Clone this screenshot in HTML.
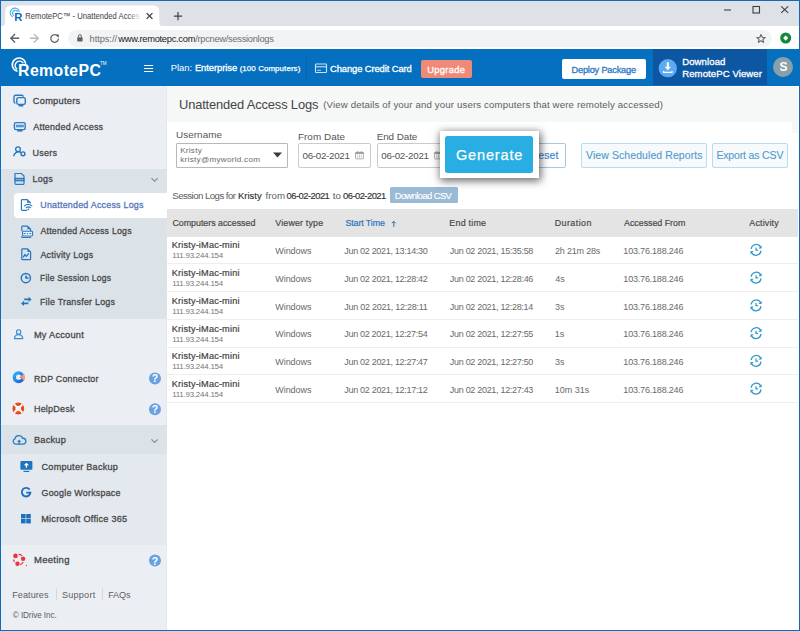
<!DOCTYPE html>
<html><head><meta charset="utf-8">
<style>
*{margin:0;padding:0;box-sizing:border-box}
html,body{width:800px;height:631px;overflow:hidden;background:#fff}
body{position:relative;font-family:"Liberation Sans",sans-serif;color:#444}
.a{position:absolute}
#frame{position:absolute;left:0;top:0;width:800px;height:631px;border:1px solid #0f6cbd;z-index:60}
svg.ov{position:absolute;left:0;top:0;z-index:20;font-family:"Liberation Sans",sans-serif}
#pop{z-index:30}
.sep{position:absolute;left:167px;width:631px;height:1px;background:#eeeeee}
.ob{position:absolute;border:1px solid #b9dbee;border-radius:2px;background:#f6fafd}
</style></head>
<body>
<div id="frame"></div>
<!-- ===== Chrome ===== -->
<div class="a" style="left:0;top:0;width:800px;height:26.3px;background:#dee1e6"></div>
<svg class="a" style="left:0;top:0" width="170" height="27"><path d="M0.5 27 Q5.2 26.5 5.2 21.5 V11.5 Q5.2 5.5 11.2 5.5 H153 Q159.3 5.5 159.3 11.5 V21.5 Q159.3 26.5 164 27 Z" fill="#fff"/></svg>
<div class="a" style="left:0;top:26px;width:800px;height:23px;background:#fff"></div>
<div class="a" style="left:68px;top:29.5px;width:704px;height:17px;background:#f1f3f4;border-radius:8.5px"></div>
<!-- ===== Header ===== -->
<div class="a" style="left:0;top:49px;width:800px;height:37px;background:#0570c0"></div>
<div class="a" style="left:653px;top:49px;width:114px;height:36px;background:#0d57a2"></div>
<div class="a" style="left:306px;top:57px;width:1px;height:21px;background:#0a60aa"></div>
<div class="a" style="left:421px;top:60px;width:50.5px;height:18.2px;background:#f08a78;border-radius:2px"></div>
<div class="a" style="left:562.3px;top:59px;width:83.7px;height:19.7px;background:#fff;border-radius:2px"></div>
<div class="a" style="left:773.1px;top:57.1px;width:19.8px;height:19.8px;background:#89a0a9;border-radius:50%"></div>
<!-- ===== Sidebar ===== -->
<div class="a" style="left:0;top:86px;width:167px;height:545px;background:#ebeff3;border-right:1px solid #e4e9ed"></div>
<div class="a" style="left:0;top:168.5px;width:167px;height:150.5px;background:#dbe3e9"></div>
<div class="a" style="left:14px;top:192.5px;width:153px;height:25.5px;background:#fff;border-radius:4px 0 0 4px"></div>
<div class="a" style="left:0;top:424.5px;width:167px;height:29.5px;background:#dbe3e9"></div>
<div class="a" style="left:0;top:454px;width:167px;height:90.5px;background:#e3e9ee"></div>
<div class="a" style="left:55.8px;top:588.4px;width:1px;height:11.6px;background:#d3d9de"></div>
<div class="a" style="left:101.8px;top:588.4px;width:1px;height:11.6px;background:#d3d9de"></div>
<!-- ===== Content ===== -->
<div class="a" style="left:167px;top:87px;width:631px;height:35.2px;background:#f6f7f7"></div>
<div class="a" style="left:792px;top:122px;width:5.8px;height:10.6px;background:#f6f7f7"></div>
<div class="a" style="left:176.3px;top:143px;width:112.1px;height:24.7px;border:1px solid #b8b8b8;border-radius:1px"></div>
<div class="a" style="left:298.4px;top:143px;width:72.2px;height:25px;border:1px solid #cbcbcb;border-radius:2px"></div>
<div class="a" style="left:377px;top:143px;width:72.2px;height:25px;border:1px solid #cbcbcb;border-radius:2px"></div>
<div class="a" style="left:490px;top:143px;width:76.3px;height:25px;border:1px solid #a9c6e6;border-radius:2px;background:#fff"></div>
<div class="ob" style="left:581.2px;top:143px;width:126.2px;height:25px"></div>
<div class="ob" style="left:712.2px;top:143px;width:75.8px;height:25px"></div>
<div class="a" style="left:390px;top:187.2px;width:67.6px;height:16.1px;background:#9bbad5;border-radius:1.5px"></div>
<div class="a" style="left:167px;top:209.3px;width:631px;height:27.4px;background:#e4e4e4"></div>
<div class="sep" style="top:263px"></div>
<div class="sep" style="top:291px"></div>
<div class="sep" style="top:319px"></div>
<div class="sep" style="top:347px"></div>
<div class="sep" style="top:374px"></div>
<div class="sep" style="top:402px"></div>
<!-- Generate popup -->
<div class="a" id="pop" style="left:439.8px;top:130.8px;width:99.1px;height:47.2px;background:#fff;box-shadow:0.5px 1.5px 8px 1px rgba(0,0,0,.58)">
 <div class="a" style="left:5.1px;top:5.2px;width:88px;height:37.1px;background:#29aee3;border-radius:2.5px"></div>
 <svg class="a" style="left:0;top:0" width="100" height="48"><text x="15.9" y="28.9" font-family="Liberation Sans" font-size="14.5" fill="#fff" stroke="#fff" stroke-width="0.25" letter-spacing="0.87">Generate</text></svg>
</div>
<svg class="ov" width="800" height="631" viewBox="0 0 800 631" fill="none">
<defs><linearGradient id="fade" gradientUnits="userSpaceOnUse" x1="128" y1="0" x2="141" y2="0"><stop offset="0" stop-color="#3c4043"/><stop offset="1" stop-color="#3c4043" stop-opacity="0"/></linearGradient></defs>



 <!-- favicon -->
 <g stroke="#3ab0f2" stroke-width="1.1" stroke-linecap="round" fill="none">
  <path d="M12.3 16.7 A4.67 4.67 0 1 1 19.3 11.3"/>
  <path d="M13.5 15.3 A2.9 2.9 0 1 1 18.2 12.2"/>
 </g>
 <text x="14.3" y="20.8" font-family="Liberation Sans" font-weight="bold" font-size="11.2" fill="#1162b7" stroke="#fff" stroke-width="1.4" paint-order="stroke">R</text>
 <!-- tab close, plus -->
 <g stroke="#3c4043" stroke-width="1.2" stroke-linecap="square">
  <path d="M147 13.5 L152 18.5 M152 13.5 L147 18.5"/>
  <path d="M178 12.7 V19.7 M174.5 16.2 H181.5"/>
 </g>
 <!-- window controls -->
 <g stroke="#3c4043" stroke-width="1.1">
  <path d="M724 10 H731"/>
  <rect x="753" y="6.5" width="6.5" height="6.5" fill="none"/>
  <path d="M781.2 6.3 L788.2 12.8 M788.2 6.3 L781.2 12.8"/>
 </g>
 <!-- nav -->
 <g stroke-width="1.4" stroke-linecap="square" fill="none">
  <path d="M18.5 38.3 H10.8 M14.6 34.5 L10.8 38.3 L14.6 42.1" stroke="#5f6368"/>
  <path d="M30.5 38.3 H38.2 M34.4 34.5 L38.2 38.3 L34.4 42.1" stroke="#b8babd"/>
  <path d="M57.6 36.2 A3.8 3.8 0 1 0 58.3 39.3" stroke="#5f6368" stroke-width="1.3"/>
 </g>
 <path d="M55.8 34.6 L58.9 34.6 L58.9 37.7 Z" fill="#5f6368"/>
 <!-- lock -->
 <rect x="77.2" y="37.3" width="5.4" height="4.1" rx="0.6" fill="#5f6368"/>
 <path d="M78.4 37.5 V36.2 A1.5 1.5 0 0 1 81.4 36.2 V37.5" stroke="#5f6368" stroke-width="1"/>
 <!-- star -->
 <path d="M761 34.5 L762.2 37.3 L765.2 37.5 L762.9 39.4 L763.6 42.4 L761 40.8 L758.4 42.4 L759.1 39.4 L756.8 37.5 L759.8 37.3 Z" stroke="#5f6368" stroke-width="1.1" stroke-linejoin="round"/>
 <!-- extension -->
 <circle cx="785.7" cy="38" r="5.5" fill="#12893a"/>
 <path d="M785.7 35.3 L788.2 38.1 L785.7 40.7 L783.2 38.1 Z" fill="#fff"/>
 <!-- logo waves -->
 <g stroke="#fff" stroke-linecap="round" fill="none">
  <path d="M16.9 71.1 A6.7 6.7 0 1 1 25.5 63.1" stroke-width="1.6"/>
  <path d="M16.7 68.9 A4.4 4.4 0 1 1 22.9 62.7" stroke-width="1.4"/>
 </g>
 <text x="100" y="64.5" font-family="Liberation Sans" font-size="4.5" fill="#fff">TM</text>
 <!-- hamburger -->
 <g stroke="#fff" stroke-width="1.1">
  <path d="M144 65.5 H153.2 M144 68.5 H153.2 M144 71.5 H153.2"/>
 </g>
 <!-- card icon -->
 <g stroke="#cfe3f5" stroke-width="1.1">
  <rect x="315.5" y="64" width="11" height="8.5" rx="0.8"/>
  <path d="M315.5 66.8 H326.5"/>
 </g>
 <path d="M317 70.3 H321" stroke="#cfe3f5" stroke-width="0.9"/>
 <!-- download circle -->
 <circle cx="667.8" cy="68.2" r="9.1" fill="#5caaf2"/>
 <path d="M666.8 62.2 H668.8 V66.8 H671 L667.8 70.2 L664.6 66.8 H666.8 Z" fill="#fff"/>
 <path d="M663.6 71 V72.4 H672 V71" stroke="#fff" stroke-width="1.2"/>

 <g stroke="#2a79c4" stroke-width="1.4" stroke-linejoin="round">
  <!-- computers -->
  <path d="M15.5 103 A1.6 1.6 0 0 1 14 101.4 V96.6 A1.6 1.6 0 0 1 15.6 95.2 H21.6 A1.6 1.6 0 0 1 23.2 96.8"/>
  <rect x="16.8" y="97.6" width="8.5" height="6.8" rx="1.6"/>
 </g>
 <path d="M18.6 104.4 H23.4 V106.5 H18.6 Z" fill="#2a79c4"/>
 <!-- attended access -->
 <rect x="14.4" y="122.6" width="10.8" height="7" rx="1.5" stroke="#2a79c4" stroke-width="1.4"/>
 <rect x="15.9" y="124.7" width="7.9" height="2.6" fill="#4d8fd0"/>
 <path d="M16.4 126 H23.4" stroke="#8fbce6" stroke-width="0.6" stroke-dasharray="0.8 0.8"/>
 <path d="M17.2 129.6 H22.4 V131.6 H17.2 Z" fill="#2a79c4"/>
 <!-- users -->
 <g stroke="#2474c0" stroke-width="1.3" fill="none">
  <circle cx="18" cy="149.3" r="2.35"/>
  <path d="M13.7 156.3 A4.9 4.9 0 0 1 20.9 152.4"/>
  <circle cx="23" cy="153.8" r="1.95" stroke-width="1.45"/>
 </g>
 <!-- logs -->
 <path d="M15 173.5 H21.5 L24 176 V183.5 A0.8 0.8 0 0 1 23.2 184.3 H15.8 A0.8 0.8 0 0 1 15 183.5 Z" stroke="#2a79c4" stroke-width="1.2"/>
 <rect x="14.6" y="177.8" width="9.8" height="3.6" fill="#2a79c4"/>
 <path d="M16.2 179.6 H23" stroke="#cfe1f1" stroke-width="0.8" stroke-dasharray="1.4 0.6"/>
 <!-- unattended logs (active) -->
 <path d="M27.2 210.4 H22.2 A0.8 0.8 0 0 1 21.4 209.6 V200.4 A0.8 0.8 0 0 1 22.2 199.6 H27.2 L30.4 202.7 V203.6" stroke="#2a79c4" stroke-width="1.2"/>
 <path d="M27 199.9 V202.7 H30.2 Z" fill="#2a79c4"/>
 <g stroke="#2a79c4" stroke-width="1.2" stroke-linecap="round">
  <path d="M24.5 205.9 Q28.1 202.9 31.8 205.9"/>
  <path d="M26.3 207.7 Q28.4 206 30.5 207.7"/>
 </g>
 <circle cx="28.4" cy="209.3" r="0.85" fill="#2a79c4"/>
 <!-- attended logs -->
 <path d="M21.8 231 V226.9 A0.7 0.7 0 0 1 22.5 226.2 H27.5 L30.6 229.2 V231" stroke="#2a79c4" stroke-width="1.2"/>
 <path d="M27.4 226.4 V229.3 H30.4 Z" fill="#2a79c4"/>
 <path d="M21.8 236 V236.8 A0.7 0.7 0 0 0 22.5 237.5 H30 A0.7 0.7 0 0 0 30.7 236.8" stroke="#2a79c4" stroke-width="1.2"/>
 <rect x="22.6" y="231.2" width="10" height="4.8" rx="0.9" stroke="#2a79c4" stroke-width="1.1" fill="#eef4fa"/>
 <path d="M23.8 233.6 H25.8 M29.4 233.6 H31.4" stroke="#2a79c4" stroke-width="1"/>
 <circle cx="27.6" cy="233.6" r="0.7" fill="#2a79c4"/>
 <!-- activity logs -->
 <path d="M21.8 258.9 V249.6 A0.7 0.7 0 0 1 22.5 248.9 H27.6 L30.6 251.9 V258.9 A0.7 0.7 0 0 1 29.9 259.6 H22.5 A0.7 0.7 0 0 1 21.8 258.9 Z" stroke="#2474c0" stroke-width="1.2"/>
 <path d="M27.5 249.1 V252 H30.4 Z" fill="#2474c0"/>
 <path d="M23.2 257.4 L24.9 254.6 L26.3 256.4 L28.9 253.4" stroke="#2474c0" stroke-width="1.2"/>
 <!-- file session clock -->
 <circle cx="25.85" cy="278.1" r="4.6" stroke="#2474c0" stroke-width="1.45"/>
 <path d="M25.9 275.4 V278.1 H28.7" stroke="#2474c0" stroke-width="1.3"/>
 <path d="M25.9 278.1 V276.3 A1.8 1.8 0 0 1 27.7 278.1 Z" fill="#2474c0"/>
 <!-- transfer arrows -->
 <g fill="#2474c0">
  <path d="M24.2 298.6 H28.6 V296.8 L31.6 299.4 L28.6 302 V300.2 H24.2 Z"/>
  <path d="M28.4 302.6 H24 V300.8 L21 303.4 L24 306 V304.2 H28.4 Z"/>
 </g>
 <!-- my account -->
 <g stroke="#3a8ad6" stroke-width="1.15">
  <circle cx="18.6" cy="331.9" r="2.15"/>
  <path d="M14.4 338.6 Q14.8 334.6 18.6 334.6 Q22.4 334.6 22.8 338.6 Z" stroke-linejoin="round"/>
 </g>
 <!-- rdp -->
 <defs>
  <linearGradient id="rdpg" x1="0" y1="0" x2="1" y2="1"><stop offset="0" stop-color="#2ab1f3"/><stop offset="1" stop-color="#1b5fe0"/></linearGradient>
  <linearGradient id="rdpo" x1="0" y1="0" x2="1" y2="0"><stop offset="0" stop-color="#f06b8a"/><stop offset="1" stop-color="#f3a866"/></linearGradient>
 </defs>
 <circle cx="18.6" cy="377.2" r="4.3" stroke="url(#rdpg)" stroke-width="3.4"/>
 <path d="M19.5 377.2 L24.5 373.6 V380.8 Z" fill="url(#rdpo)"/>
 <!-- helpdesk -->
 <circle cx="18.3" cy="408.5" r="4.3" stroke="#e8491f" stroke-width="3.2"/>
 <circle cx="18.3" cy="408.5" r="2.6" fill="#f4f6f8"/>
 <g stroke="#fff" stroke-width="2">
  <path d="M14.2 404.4 L16.5 406.7 M22.4 404.4 L20.1 406.7 M14.2 412.6 L16.5 410.3 M22.4 412.6 L20.1 410.3"/>
 </g>
 <!-- backup cloud -->
 <path d="M15.6 444.1 A2.7 2.7 0 0 1 14.9 438.9 A4 4 0 0 1 22.6 438.3 A2.9 2.9 0 0 1 23.3 444.1 Z" stroke="#2a79c4" stroke-width="1.3" stroke-linejoin="round"/>
 <path d="M19.2 444.2 V440.6" stroke="#2a79c4" stroke-width="1.3"/>
 <path d="M17.2 441.9 L19.2 439.6 L21.2 441.9 Z" fill="#2a79c4"/>
 <!-- computer backup -->
 <rect x="20.4" y="461" width="12" height="8.8" rx="1" fill="#1f74c2"/>
 <path d="M23.5 470.8 H29.3 V472 H23.5 Z" fill="#1f74c2"/>
 <path d="M26.4 467.8 V463.6 M24.6 465.3 L26.4 463.5 L28.2 465.3" stroke="#fff" stroke-width="1.2"/>
 <!-- G -->
 <path d="M29.6 489.6 A4.3 4.3 0 1 0 30.4 492.6 H26.2" stroke="#1f6fc0" stroke-width="1.9"/>
 <!-- windows -->
 <g fill="#1f6fc0">
  <rect x="21" y="514" width="4.6" height="4.4"/><rect x="26.2" y="514" width="4.6" height="4.4"/>
  <rect x="21" y="519" width="4.6" height="4.4"/><rect x="26.2" y="519" width="4.6" height="4.4"/>
 </g>
 <!-- meeting -->
 <g fill="#ef3340">
  <circle cx="15.5" cy="555.9" r="2.3"/><circle cx="23.1" cy="558.7" r="2.2"/><circle cx="17.5" cy="563.8" r="2.2"/>
  <circle cx="26.4" cy="565.4" r="0.6"/>
 </g>
 <g stroke="#ef3340" stroke-width="1.2" fill="none">
  <path d="M18.6 554.4 A5 5 0 0 1 22 555.7"/>
  <path d="M13.6 559.5 A5 5 0 0 0 14.5 562"/>
  <path d="M20.3 564.6 A5 5 0 0 0 23.2 562"/>
 </g>
 <!-- chevrons -->
 <path d="M151.4 178.1 L154.6 181.1 L157.8 178.1" stroke="#868c91" stroke-width="1.15"/>
 <path d="M151.4 439.4 L154.6 442.4 L157.8 439.4" stroke="#868c91" stroke-width="1.15"/>
 <!-- question icons -->
 <g>
  <circle cx="155" cy="378.4" r="6" fill="#68a1e2"/>
  <circle cx="155" cy="409.3" r="6" fill="#68a1e2"/>
  <circle cx="155" cy="560.6" r="6" fill="#68a1e2"/>
 </g>
 <g font-family="Liberation Sans" font-weight="bold" font-size="10.4" fill="#fff" text-anchor="middle">
  <text x="155" y="382.4">?</text><text x="155" y="413.3">?</text><text x="155" y="564.6">?</text>
 </g>
 <!-- select arrow -->
 <path d="M273 152.5 H282 L277.5 157.5 Z" fill="#3a3a3a"/>
 <!-- calendar icons -->
 <g transform="translate(0 0)">
  <rect x="355.5" y="152.3" width="8" height="6.6" rx="0.6" stroke="#a6a6a6" stroke-width="0.85"/>
  <rect x="355.5" y="152.3" width="8" height="1.6" fill="#959595"/>
  <path d="M357.6 151.3 V152.6 M361.4 151.3 V152.6" stroke="#8a8a8a" stroke-width="0.9"/>
  <path d="M357.7 154.6 V158.4 M359.5 154.6 V158.4 M361.3 154.6 V158.4" stroke="#b8b8b8" stroke-width="0.7"/>
 </g>
 <g transform="translate(79 0)">
  <rect x="355.5" y="152.3" width="8" height="6.6" rx="0.6" stroke="#a6a6a6" stroke-width="0.85"/>
  <rect x="355.5" y="152.3" width="8" height="1.6" fill="#959595"/>
  <path d="M357.6 151.3 V152.6 M361.4 151.3 V152.6" stroke="#8a8a8a" stroke-width="0.9"/>
  <path d="M357.7 154.6 V158.4 M359.5 154.6 V158.4 M361.3 154.6 V158.4" stroke="#b8b8b8" stroke-width="0.7"/>
 </g>
 <!-- sort arrow -->
 <path d="M393.8 227 V221.5 M392 223.2 L393.8 221.3 L395.6 223.2" stroke="#2a6fb3" stroke-width="1"/>
 <defs>
  <g id="acticon">
   <path d="M1.2 5.2 A5 5 0 0 1 10.6 3.3" stroke="#3596c9" stroke-width="1.3" fill="none"/>
   <path d="M11.6 1.6 V4.8 H8.4 Z" fill="#3596c9"/>
   <path d="M10.9 6.8 A5 5 0 0 1 1.5 8.8" stroke="#3596c9" stroke-width="1.3" fill="none"/>
   <path d="M0.5 10.4 V7.2 H3.7 Z" fill="#3596c9"/>
   <path d="M6 3.8 V6.4 H8" stroke="#3596c9" stroke-width="1.2" fill="none"/>
  </g>
 </defs>
 <use href="#acticon" x="750" y="243.80"/>
 <use href="#acticon" x="750" y="271.55"/>
 <use href="#acticon" x="750" y="299.30"/>
 <use href="#acticon" x="750" y="327.05"/>
 <use href="#acticon" x="750" y="354.80"/>
 <use href="#acticon" x="750" y="382.55"/>

<g>
<text x="89.56" y="41.50" font-size="9.3" fill="#6b6f73" letter-spacing="-0.068">https://</text>
<text x="118.32" y="41.50" font-size="9.3" fill="#202124" letter-spacing="-0.270">www.remotepc.com</text>
<text x="195.20" y="41.50" font-size="9.3" fill="#6b6f73" letter-spacing="-0.283">/rpcnew/sessionlogs</text>
<text x="170.63" y="71.00" font-size="9.4" fill="#ffffff">Plan:</text>
<text x="194.88" y="71.00" font-size="9.4" fill="#ffffff" stroke="#ffffff" stroke-width="0.3" letter-spacing="-0.051">Enterprise</text>
<text x="239.64" y="71.00" font-size="7.9" fill="#ffffff" stroke="#ffffff" stroke-width="0.25" letter-spacing="0.104">(100 Computers)</text>
<text x="330.08" y="71.50" font-size="9.4" fill="#ffffff" stroke="#ffffff" stroke-width="0.3" letter-spacing="-0.101">Change Credit Card</text>
<text x="427.33" y="72.50" font-size="9.4" fill="#ffffff" stroke="#ffffff" stroke-width="0.3" letter-spacing="0.263">Upgrade</text>
<text x="571.50" y="72.50" font-size="9.2" fill="#2b78c2" stroke="#2b78c2" stroke-width="0.3" letter-spacing="-0.180">Deploy Package</text>
<text x="682.16" y="65.40" font-size="9.6" fill="#ffffff" stroke="#ffffff" stroke-width="0.3" letter-spacing="0.087">Download</text>
<text x="682.16" y="77.40" font-size="9.6" fill="#ffffff" stroke="#ffffff" stroke-width="0.3" letter-spacing="0.075">RemotePC Viewer</text>
<text x="779.46" y="70.90" font-size="12.1" fill="#ffffff" font-weight="bold">S</text>
<text transform="translate(32.78 104.30) scale(0.9496 1)" font-size="9.8" fill="#474747" stroke="#474747" stroke-width="0.3" letter-spacing="0.25">Computers</text>
<text transform="translate(33.22 130.20) scale(0.9146 1)" font-size="9.8" fill="#474747" stroke="#474747" stroke-width="0.3" letter-spacing="0.25">Attended Access</text>
<text transform="translate(32.54 156.20) scale(0.9232 1)" font-size="9.8" fill="#474747" stroke="#474747" stroke-width="0.3" letter-spacing="0.25">Users</text>
<text transform="translate(32.50 182.10) scale(0.9177 1)" font-size="9.8" fill="#474747" stroke="#474747" stroke-width="0.3" letter-spacing="0.25">Logs</text>
<text transform="translate(40.25 208.35) scale(0.9082 1)" font-size="9.8" fill="#5274bb" stroke="#5274bb" stroke-width="0.3" letter-spacing="0.25">Unattended Access Logs</text>
<text transform="translate(40.42 234.20) scale(0.8981 1)" font-size="9.8" fill="#474747" stroke="#474747" stroke-width="0.3" letter-spacing="0.25">Attended Access Logs</text>
<text transform="translate(40.42 257.90) scale(0.9114 1)" font-size="9.8" fill="#474747" stroke="#474747" stroke-width="0.3" letter-spacing="0.25">Activity Logs</text>
<text transform="translate(39.93 281.40) scale(0.8758 1)" font-size="9.8" fill="#474747" stroke="#474747" stroke-width="0.3" letter-spacing="0.25">File Session Logs</text>
<text transform="translate(39.91 304.70) scale(0.9068 1)" font-size="9.8" fill="#474747" stroke="#474747" stroke-width="0.3" letter-spacing="0.25">File Transfer Logs</text>
<text transform="translate(33.88 337.50) scale(0.9458 1)" font-size="9.8" fill="#474747" stroke="#474747" stroke-width="0.3" letter-spacing="0.25">My Account</text>
<text transform="translate(33.91 381.50) scale(0.9040 1)" font-size="9.8" fill="#474747" stroke="#474747" stroke-width="0.3" letter-spacing="0.25">RDP Connector</text>
<text transform="translate(33.90 412.40) scale(0.9189 1)" font-size="9.8" fill="#474747" stroke="#474747" stroke-width="0.3" letter-spacing="0.25">HelpDesk</text>
<text transform="translate(33.88 443.30) scale(0.9447 1)" font-size="9.8" fill="#474747" stroke="#474747" stroke-width="0.3" letter-spacing="0.25">Backup</text>
<text transform="translate(41.48 470.20) scale(0.9343 1)" font-size="9.8" fill="#474747" stroke="#474747" stroke-width="0.3" letter-spacing="0.25">Computer Backup</text>
<text transform="translate(41.49 496.00) scale(0.9097 1)" font-size="9.8" fill="#474747" stroke="#474747" stroke-width="0.3" letter-spacing="0.25">Google Workspace</text>
<text transform="translate(41.19 522.10) scale(0.9382 1)" font-size="9.8" fill="#474747" stroke="#474747" stroke-width="0.3" letter-spacing="0.25">Microsoft Office 365</text>
<text transform="translate(34.11 563.30) scale(0.9722 1)" font-size="9.8" fill="#474747" stroke="#474747" stroke-width="0.3" letter-spacing="0.25">Meeting</text>
<text x="12.15" y="597.90" font-size="9.1" fill="#5e5e5e" letter-spacing="0.074">Features</text>
<text x="61.89" y="597.90" font-size="9.1" fill="#5e5e5e" letter-spacing="0.249">Support</text>
<text x="108.15" y="597.90" font-size="9.1" fill="#5e5e5e" letter-spacing="-0.128">FAQs</text>
<text x="12.78" y="618.20" font-size="8.2" fill="#5e5e5e" letter-spacing="-0.097">© IDrive Inc.</text>
<text x="179.01" y="109.00" font-size="12.9" fill="#454545" letter-spacing="-0.155">Unattended Access Logs</text>
<text x="323.20" y="107.70" font-size="9.7" fill="#5e5e5e" letter-spacing="0.118">(View details of your and your users computers that were remotely accessed)</text>
<text x="175.99" y="137.75" font-size="9.9" fill="#555555" letter-spacing="0.068">Username</text>
<text x="297.94" y="139.60" font-size="9.9" fill="#555555" letter-spacing="0.055">From Date</text>
<text x="376.69" y="139.60" font-size="9.9" fill="#555555" letter-spacing="-0.075">End Date</text>
<text x="180.14" y="152.70" font-size="8.1" fill="#6a6a6a" letter-spacing="0.286">Kristy</text>
<text x="180.26" y="162.20" font-size="8.1" fill="#6a6a6a" letter-spacing="0.291">kristy@myworld.com</text>
<text x="302.52" y="158.80" font-size="9.8" fill="#555555" letter-spacing="-0.308">06-02-2021</text>
<text x="381.32" y="158.80" font-size="9.8" fill="#555555" letter-spacing="-0.264">06-02-2021</text>
<text x="530.61" y="159.30" font-size="10.5" fill="#3f80cf" stroke="#3f80cf" stroke-width="0.15" letter-spacing="0.090">Reset</text>
<text x="586.02" y="159.30" font-size="10.5" fill="#559ac9" stroke="#559ac9" stroke-width="0.12" letter-spacing="0.081">View Scheduled Reports</text>
<text x="716.40" y="159.20" font-size="10.5" fill="#559ac9" stroke="#559ac9" stroke-width="0.12" letter-spacing="-0.156">Export as CSV</text>
<text x="172.26" y="198.80" font-size="9.7" fill="#5c5c5c" letter-spacing="-0.558">Session Logs for</text>
<text x="238.00" y="198.80" font-size="9.4" fill="#333333" stroke="#333333" stroke-width="0.15" letter-spacing="0.038">Kristy</text>
<text x="265.56" y="198.80" font-size="9.7" fill="#5c5c5c" letter-spacing="0.022">from</text>
<text x="286.51" y="198.80" font-size="9.4" fill="#333333" stroke="#333333" stroke-width="0.15" letter-spacing="-0.513">06-02-2021</text>
<text x="332.65" y="198.80" font-size="9.7" fill="#5c5c5c" letter-spacing="0.153">to</text>
<text x="343.01" y="198.80" font-size="9.4" fill="#333333" stroke="#333333" stroke-width="0.15" letter-spacing="-0.524">06-02-2021</text>
<text x="394.81" y="198.80" font-size="9.3" fill="#ffffff" stroke="#ffffff" stroke-width="0.15" letter-spacing="-0.556">Download CSV</text>
<text x="172.40" y="225.80" font-size="8.9" fill="#474747" stroke="#474747" stroke-width="0.18" letter-spacing="-0.024">Computers accessed</text>
<text x="275.30" y="226.20" font-size="8.9" fill="#474747" stroke="#474747" stroke-width="0.18" letter-spacing="0.156">Viewer type</text>
<text x="345.39" y="226.20" font-size="8.9" fill="#2a72bb" stroke="#2a72bb" stroke-width="0.18" letter-spacing="-0.105">Start Time</text>
<text x="449.36" y="226.20" font-size="8.9" fill="#474747" stroke="#474747" stroke-width="0.18" letter-spacing="0.225">End time</text>
<text x="554.76" y="226.20" font-size="8.9" fill="#474747" stroke="#474747" stroke-width="0.18" letter-spacing="0.440">Duration</text>
<text x="624.07" y="226.20" font-size="8.9" fill="#474747" stroke="#474747" stroke-width="0.18" letter-spacing="-0.034">Accessed From</text>
<text x="749.32" y="226.20" font-size="8.9" fill="#474747" stroke="#474747" stroke-width="0.18" letter-spacing="0.167">Activity</text>
<text x="171.74" y="248.25" font-size="9.2" fill="#3d3d3d" stroke="#3d3d3d" stroke-width="0.18" letter-spacing="0.158">Kristy-iMac-mini</text>
<text x="172.15" y="258.30" font-size="7.9" fill="#767676" letter-spacing="-0.205">111.93.244.154</text>
<text x="275.21" y="254.00" font-size="9.0" fill="#6a6a6a" letter-spacing="-0.034">Windows</text>
<text x="344.26" y="254.00" font-size="9.0" fill="#6a6a6a" letter-spacing="-0.305">Jun 02 2021, 13:14:30</text>
<text x="449.87" y="254.00" font-size="9.0" fill="#6a6a6a" letter-spacing="-0.303">Jun 02 2021, 15:35:58</text>
<text x="554.95" y="254.00" font-size="9.0" fill="#6a6a6a" letter-spacing="-0.184">2h 21m 28s</text>
<text x="623.32" y="254.00" font-size="9.0" fill="#6a6a6a" letter-spacing="-0.191">103.76.188.246</text>
<text x="171.74" y="276.00" font-size="9.2" fill="#3d3d3d" stroke="#3d3d3d" stroke-width="0.18" letter-spacing="0.158">Kristy-iMac-mini</text>
<text x="172.15" y="286.05" font-size="7.9" fill="#767676" letter-spacing="-0.205">111.93.244.154</text>
<text x="275.21" y="281.75" font-size="9.0" fill="#6a6a6a" letter-spacing="-0.034">Windows</text>
<text x="344.26" y="281.75" font-size="9.0" fill="#6a6a6a" letter-spacing="-0.300">Jun 02 2021, 12:28:42</text>
<text x="449.87" y="281.75" font-size="9.0" fill="#6a6a6a" letter-spacing="-0.303">Jun 02 2021, 12:28:46</text>
<text x="555.20" y="281.75" font-size="9.0" fill="#6a6a6a">4s</text>
<text x="623.32" y="281.75" font-size="9.0" fill="#6a6a6a" letter-spacing="-0.191">103.76.188.246</text>
<text x="171.74" y="303.75" font-size="9.2" fill="#3d3d3d" stroke="#3d3d3d" stroke-width="0.18" letter-spacing="0.158">Kristy-iMac-mini</text>
<text x="172.15" y="313.80" font-size="7.9" fill="#767676" letter-spacing="-0.205">111.93.244.154</text>
<text x="275.21" y="309.50" font-size="9.0" fill="#6a6a6a" letter-spacing="-0.034">Windows</text>
<text x="344.26" y="309.50" font-size="9.0" fill="#6a6a6a" letter-spacing="-0.267">Jun 02 2021, 12:28:11</text>
<text x="449.87" y="309.50" font-size="9.0" fill="#6a6a6a" letter-spacing="-0.309">Jun 02 2021, 12:28:14</text>
<text x="555.06" y="309.50" font-size="9.0" fill="#6a6a6a">3s</text>
<text x="623.32" y="309.50" font-size="9.0" fill="#6a6a6a" letter-spacing="-0.191">103.76.188.246</text>
<text x="171.74" y="331.50" font-size="9.2" fill="#3d3d3d" stroke="#3d3d3d" stroke-width="0.18" letter-spacing="0.158">Kristy-iMac-mini</text>
<text x="172.15" y="341.55" font-size="7.9" fill="#767676" letter-spacing="-0.205">111.93.244.154</text>
<text x="275.21" y="337.25" font-size="9.0" fill="#6a6a6a" letter-spacing="-0.034">Windows</text>
<text x="344.26" y="337.25" font-size="9.0" fill="#6a6a6a" letter-spacing="-0.309">Jun 02 2021, 12:27:54</text>
<text x="449.87" y="337.25" font-size="9.0" fill="#6a6a6a" letter-spacing="-0.304">Jun 02 2021, 12:27:55</text>
<text x="554.72" y="337.25" font-size="9.0" fill="#6a6a6a">1s</text>
<text x="623.32" y="337.25" font-size="9.0" fill="#6a6a6a" letter-spacing="-0.191">103.76.188.246</text>
<text x="171.74" y="359.25" font-size="9.2" fill="#3d3d3d" stroke="#3d3d3d" stroke-width="0.18" letter-spacing="0.158">Kristy-iMac-mini</text>
<text x="172.15" y="369.30" font-size="7.9" fill="#767676" letter-spacing="-0.205">111.93.244.154</text>
<text x="275.21" y="365.00" font-size="9.0" fill="#6a6a6a" letter-spacing="-0.034">Windows</text>
<text x="344.26" y="365.00" font-size="9.0" fill="#6a6a6a" letter-spacing="-0.300">Jun 02 2021, 12:27:47</text>
<text x="449.87" y="365.00" font-size="9.0" fill="#6a6a6a" letter-spacing="-0.305">Jun 02 2021, 12:27:50</text>
<text x="555.06" y="365.00" font-size="9.0" fill="#6a6a6a">3s</text>
<text x="623.32" y="365.00" font-size="9.0" fill="#6a6a6a" letter-spacing="-0.191">103.76.188.246</text>
<text x="171.74" y="387.00" font-size="9.2" fill="#3d3d3d" stroke="#3d3d3d" stroke-width="0.18" letter-spacing="0.158">Kristy-iMac-mini</text>
<text x="172.15" y="397.05" font-size="7.9" fill="#767676" letter-spacing="-0.205">111.93.244.154</text>
<text x="275.21" y="392.75" font-size="9.0" fill="#6a6a6a" letter-spacing="-0.034">Windows</text>
<text x="344.26" y="392.75" font-size="9.0" fill="#6a6a6a" letter-spacing="-0.300">Jun 02 2021, 12:17:12</text>
<text x="449.87" y="392.75" font-size="9.0" fill="#6a6a6a" letter-spacing="-0.303">Jun 02 2021, 12:27:43</text>
<text x="554.72" y="392.75" font-size="9.0" fill="#6a6a6a">10m 31s</text>
<text x="623.32" y="392.75" font-size="9.0" fill="#6a6a6a" letter-spacing="-0.191">103.76.188.246</text>
<text x="18.06" y="76.10" font-size="15.8" fill="#ffffff" font-weight="bold" letter-spacing="0.424">RemotePC</text>
<text x="25.3" y="18.75" font-size="8.5" fill="url(#fade)" textLength="118" lengthAdjust="spacingAndGlyphs">RemotePC™ - Unattended Access</text>
</g>
</svg>
</body></html>
